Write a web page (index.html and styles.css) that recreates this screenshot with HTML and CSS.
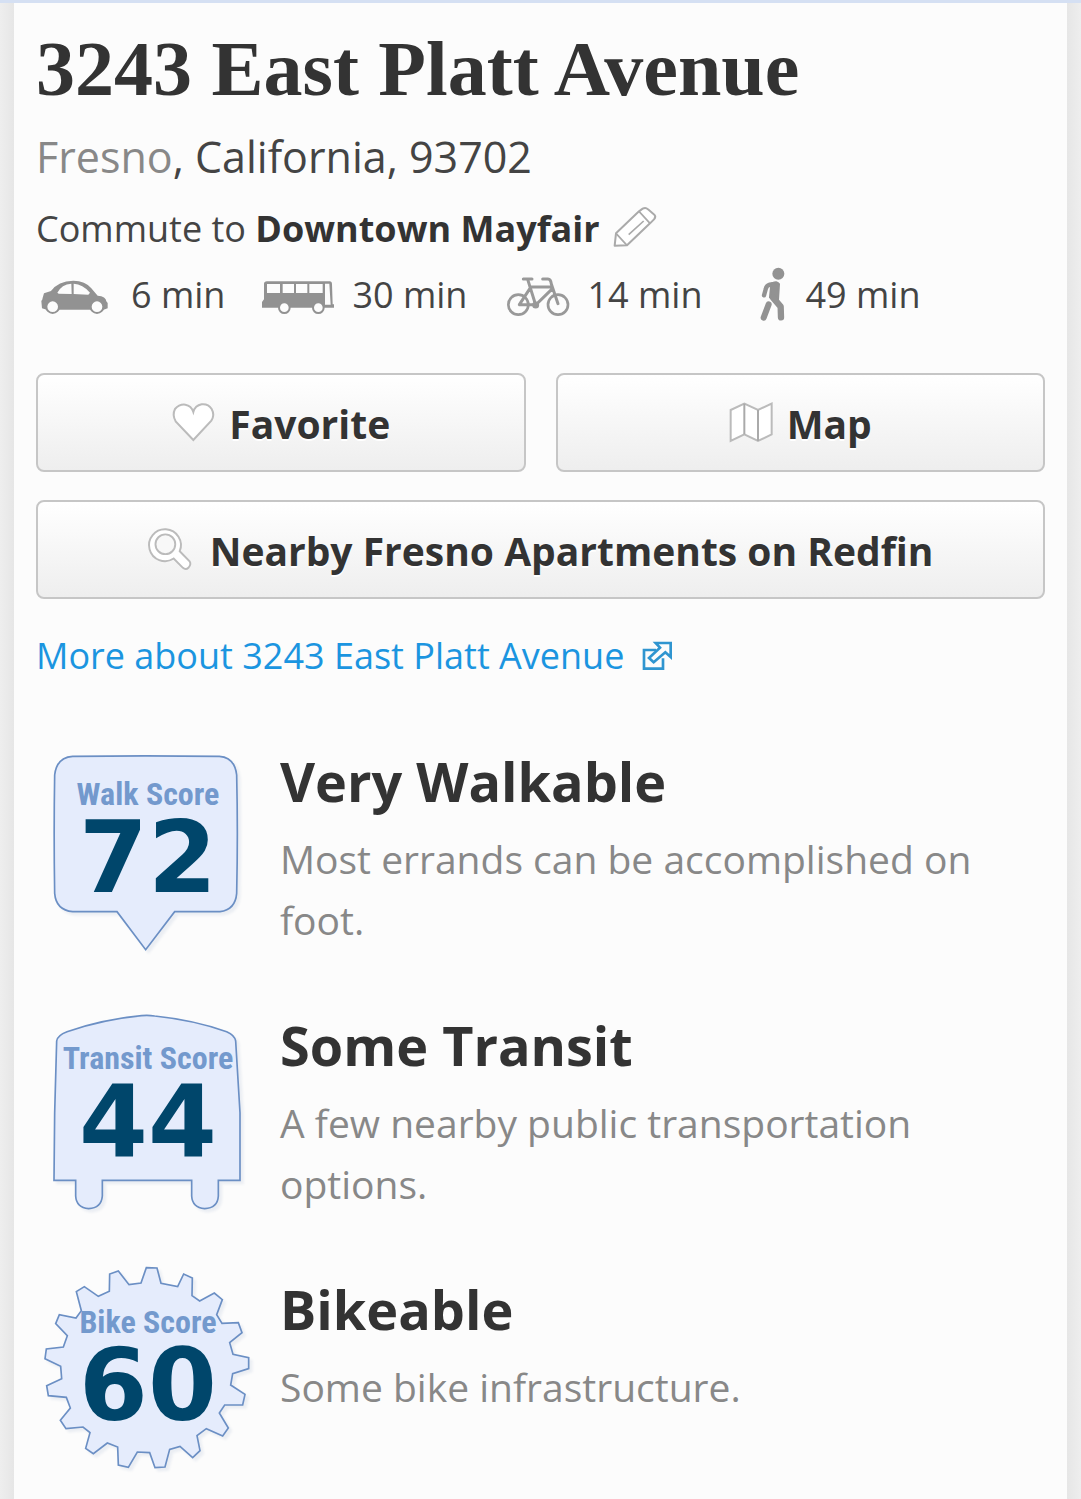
FILE: index.html
```html
<!DOCTYPE html>
<html lang="en">
<head>
  <meta charset="UTF-8">
  <meta name="viewport" content="width=device-width, initial-scale=1.0">
  <title>3243 East Platt Avenue - Walk Score</title>
  <link rel="stylesheet" href="styles.css">
</head>
<body>
  <main class="page">
    <h1>3243 East Platt Avenue</h1>
    <p class="location"><a href="#">Fresno</a>, California, 93702</p>

    <div class="commute">
      <p>Commute to <strong>Downtown Mayfair</strong></p>
      <button class="edit" aria-label="Edit commute">
        <svg viewBox="810 6 141 141" fill="#fff" stroke="#aaa" stroke-width="6" stroke-linejoin="round">
          <path d="M818 131L822 94L891 28L902 20Q911 15 918 22L937 38Q943 44 936 52L924 64L855 130Z"/>
          <path d="M822 94L855 130M891 28L924 64M860 98L905 57" fill="none" stroke-width="5"/>
        </svg>
      </button>
    </div>

    <ul class="times">
      <li>
        <svg class="car" viewBox="18 195 225 168">
          <path fill="#929292" d="M36 322L34 300Q38 296 38 290L42 277L63 270Q84 240 130 239Q166 239 184 262L203 284Q228 286 229 301L233 306V322L221 326H184L84 326H50Z"/>
          <path fill="#fcfcfc" d="M82 275Q95 250 124 248L125 279L86 278ZM131 248Q158 249 180 275L175 281L131 279Z"/>
          <circle cx="68" cy="317" r="19" fill="#fcfcfc" stroke="#929292" stroke-width="6"/>
          <circle cx="201" cy="317" r="19" fill="#fcfcfc" stroke="#929292" stroke-width="6"/>
        </svg>
        6 min
      </li>
      <li>
        <svg class="bus" viewBox="693 195 213 168">
          <path fill="#929292" d="M702 249Q702 241 711 241H899Q906 241 906 250L908 310H912V320H696V303L702 295Z"/>
          <path fill="#fcfcfc" d="M711 249H750V276H711ZM758 249H792V276H758ZM798 249H832V276H798ZM838 249H878V276H838ZM885 248H898L902 311H885Z"/>
          <circle cx="763" cy="320" r="16" fill="#fcfcfc" stroke="#929292" stroke-width="6"/>
          <circle cx="865" cy="320" r="16" fill="#fcfcfc" stroke="#929292" stroke-width="6"/>
        </svg>
        30 min
      </li>
      <li>
        <svg class="bike" viewBox="489 195 192 168" fill="none" stroke="#999" stroke-width="9" stroke-linecap="round" stroke-linejoin="round">
          <circle cx="535" cy="311" r="30" stroke-width="8"/>
          <circle cx="654" cy="311" r="30" stroke-width="8"/>
          <path d="M550 234H576M563 235L587 312L635 265M571 258H632M570 262L538 311H587M608 234H624Q632 234 634 249L654 308"/>
          <circle cx="587" cy="312" r="6" fill="#999"/>
        </svg>
        14 min
      </li>
      <li>
        <svg class="walk" viewBox="111 45 141 168" fill="none" stroke="#929292" stroke-linecap="round" stroke-linejoin="round">
          <circle cx="232" cy="68" r="18" fill="#929292" stroke="none"/>
          <path d="M226 98L206 101Q196 104 194 115L189 133" stroke-width="13"/>
          <path fill="#929292" stroke-width="6" d="M211 98Q228 91 234 99L231 147L207 139Z"/>
          <path d="M216 140L239 167L240 199" stroke-width="19"/>
          <path d="M203 160L188 200" stroke-width="18"/>
        </svg>
        49 min
      </li>
    </ul>

    <div class="actions">
      <button class="btn">
        <svg class="heart" viewBox="426 105 132 132">
          <path d="M493 225L440 169Q429 150 438 132Q451 117 469 119Q487 122 493 141Q498 122 518 118Q538 116 548 132Q558 150 547 167Z"/>
        </svg>
        Favorite
      </button>
      <button class="btn">
        <svg class="map" viewBox="87 102 132 132">
          <path d="M92 132L133 113L174 132L215 113V205L174 225L133 205L92 225Z"/>
          <path d="M133 113V205M174 132V225" stroke="#aaa"/>
        </svg>
        Map
      </button>
      <button class="btn wide">
        <svg class="search" viewBox="364 484 135 138">
          <path d="M462 560L493 592Q499 600 490 611Q481 620 472 612L443 583A50 50 0 1 1 462 560Z"/>
          <circle cx="417" cy="538" r="31" fill="#f8f8f8"/>
        </svg>
        Nearby Fresno Apartments on Redfin
      </button>
    </div>

    <a class="more" href="#">
      More about 3243 East Platt Avenue
      <svg viewBox="126 30 87 90" fill="none" stroke="#2f95d0" stroke-width="8">
        <path d="M165 57H129V113H186V82"/>
        <path d="M158 94L144 81L177 50L164 36H209V78L193 64Z"/>
      </svg>
    </a>

    <section class="scores">
      <article class="score">
        <div class="badge">
          <svg viewBox="-12 0 660 660">
            <path d="M98 49Q315 46 538 49Q584 52 590 105Q594 280 590 460Q586 509 540 515H404L317 629L231 515H98Q48 510 44 460Q41 280 44 105Q50 52 98 49Z"/>
          </svg>
          <div class="badge-text">
            <span class="label">Walk Score</span>
            <span class="number">72</span>
          </div>
        </div>
        <div class="info">
          <h2>Very Walkable</h2>
          <p>Most errands can be accomplished on foot.</p>
        </div>
      </article>

      <article class="score">
        <div class="badge">
          <svg viewBox="-12 9 660 660">
            <path d="M50 120Q52 103 81 92Q190 55 305 44Q324 42 344 45Q460 57 560 92Q584 102 587 120L600 335V538H535V585Q533 621 494 623Q457 620 455 585V538H187V585Q184 621 146 623Q109 620 107 585V538H42L44 335Z"/>
          </svg>
          <div class="badge-text">
            <span class="label">Transit Score</span>
            <span class="number">44</span>
          </div>
        </div>
        <div class="info">
          <h2>Some Transit</h2>
          <p>A few nearby public transportation options.</p>
        </div>
      </article>

      <article class="score">
        <div class="badge">
          <svg viewBox="3 36 660 660">
            <path d="M334 35L366 36L378 82L428 92L446 54L472 66L471 119L494 135L538 111L562 131L545 176L561 202L610 200L621 230L584 260L594 295L641 305V338L593 353L587 387L630 415L623 447L569 447L553 471L580 516L563 540L514 518L486 539L495 584L473 605L435 571L404 580L390 633L360 635L344 590L307 588L280 634L250 627L248 573L217 561L175 593L152 577L165 530L144 513L93 518L76 493L106 456L94 424L40 419L35 389L80 368L77 331L30 308L34 279L85 273L97 239L62 203L73 176L123 186L139 164L124 107L148 92L190 121L223 106L224 54L250 45L282 86L318 81Z"/>
          </svg>
          <div class="badge-text">
            <span class="label">Bike Score</span>
            <span class="number">60</span>
          </div>
        </div>
        <div class="info">
          <h2>Bikeable</h2>
          <p>Some bike infrastructure.</p>
        </div>
      </article>
    </section>
  </main>
</body>
</html>
```

FILE: styles.css
```css
* {
  box-sizing: border-box;
}

body {
  margin: 0;
  padding: 0 14px;
  background: linear-gradient(to right, #eeeeee, #e6e6e6 14px, #e6e6e6 calc(100% - 14px), #eeeeee);
  border-top: 3px solid #d5e0f3;
  font-family: "Open Sans", sans-serif;
  font-size: 36px;
  color: #444;
}

h1,
h2,
p,
ul {
  margin: 0;
  padding: 0;
}

svg {
  display: block;
  flex: none;
  overflow: visible;
}

.page {
  min-height: calc(100vh - 3px);
  padding: 26px 22px 0;
  background: #fcfcfc;
}

h1 {
  font-family: "Liberation Serif", serif;
  font-size: 78px;
  line-height: 80px;
  color: #333;
}

.location {
  margin-top: 16px;
  font-size: 43px;
  line-height: 64px;
}

.location a {
  color: #888;
  text-decoration: none;
}

.commute {
  display: flex;
  align-items: center;
  gap: 12px;
  margin-top: 12px;
  line-height: 56px;
}

.commute strong {
  color: #333;
}

.edit {
  padding: 0 0 4px;
  border: none;
  background: none;
  cursor: pointer;
}

.edit svg {
  width: 47px;
  height: 47px;
}

.times {
  display: flex;
  gap: 36px;
  list-style: none;
  margin-top: 8px;
}

.times li {
  display: flex;
  align-items: center;
  gap: 20px;
  line-height: 60px;
  white-space: nowrap;
}

.times svg {
  height: 56px;
  margin-bottom: 2px;
}

.car {
  width: 75px;
}

.bus {
  width: 71px;
}

.bike {
  width: 64px;
}

.walk {
  width: 47px;
}

.actions {
  display: grid;
  grid-template-columns: 1fr 1fr;
  gap: 28px 30px;
  margin-top: 48px;
}

.btn {
  display: flex;
  align-items: center;
  justify-content: center;
  gap: 14px;
  height: 99px;
  padding: 2px 0 0;
  border: 2px solid #c6c6c6;
  border-radius: 8px;
  background: linear-gradient(#fff, #eee);
  font-family: inherit;
  font-size: 39px;
  font-weight: bold;
  line-height: 56px;
  color: #333;
  text-shadow: 0 2px 0 #fff;
  cursor: pointer;
}

.btn svg {
  width: 44px;
  height: 44px;
  margin-bottom: 4px;
  fill: #fff;
  stroke: #bbb;
  stroke-width: 6;
}

.wide {
  grid-column: 1 / -1;
  gap: 18px;
}

.more {
  display: flex;
  align-items: center;
  gap: 19px;
  margin-top: 29px;
  line-height: 56px;
  color: #1b95e0;
  text-decoration: none;
}

.more svg {
  width: 29px;
  height: 30px;
}

.scores {
  margin-top: 56px;
}

.score {
  display: flex;
  gap: 24px;
  margin-bottom: 44px;
}

.badge {
  display: grid;
  flex: none;
  width: 220px;
  height: 220px;
}

.badge svg,
.badge-text {
  grid-area: 1 / 1;
}

.badge svg {
  width: 220px;
  height: 220px;
  fill: #e5ecfc;
  stroke: #6b8fc4;
  stroke-width: 5;
  filter: drop-shadow(3px 3px 1px #ebeef3);
}

.badge-text {
  display: flex;
  flex-direction: column;
  align-items: center;
  padding: 34px 0 0 4px;
  z-index: 1;
}

.label {
  font-family: "Roboto Condensed", Roboto, sans-serif;
  font-size: 32px;
  font-weight: bold;
  line-height: 40px;
  color: #7399cd;
  white-space: nowrap;
}

.number {
  font-family: "DejaVu Sans", sans-serif;
  font-size: 99px;
  font-weight: bold;
  line-height: 88px;
  color: #00466b;
}

.info h2 {
  margin-top: 4px;
  font-size: 54px;
  line-height: 74px;
  color: #333;
}

.info p {
  margin-top: 10px;
  font-size: 39px;
  line-height: 61px;
  color: #888;
}
```
